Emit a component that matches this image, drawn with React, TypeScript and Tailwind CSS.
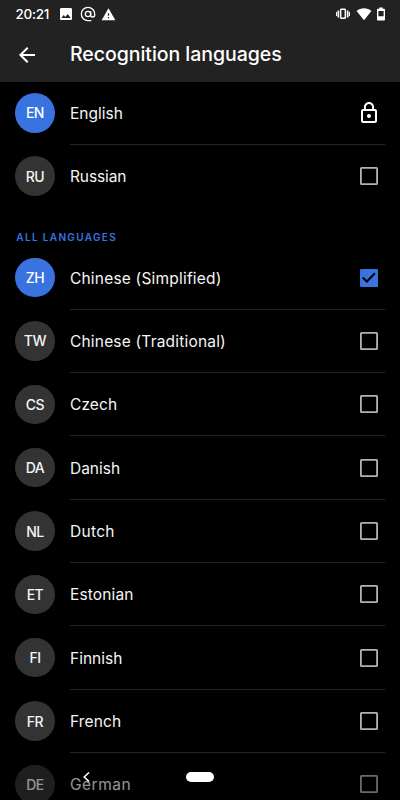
type Language = { code: string; name: string; state: 'locked' | 'on' | 'off'; spacing: string; last?: boolean };

const recent: Language[] = [
  { code: 'EN', name: 'English', state: 'locked', spacing: 'tracking-[0px]' },
  { code: 'RU', name: 'Russian', state: 'off', spacing: 'tracking-[-0.1px]', last: true },
];

const all: Language[] = [
  { code: 'ZH', name: 'Chinese (Simplified)', state: 'on', spacing: 'tracking-[0.2px]' },
  { code: 'TW', name: 'Chinese (Traditional)', state: 'off', spacing: 'tracking-[0.19px]' },
  { code: 'CS', name: 'Czech', state: 'off', spacing: 'tracking-[0.1px]' },
  { code: 'DA', name: 'Danish', state: 'off', spacing: 'tracking-[0px]' },
  { code: 'NL', name: 'Dutch', state: 'off', spacing: 'tracking-[0.3px]' },
  { code: 'ET', name: 'Estonian', state: 'off', spacing: 'tracking-[0.15px]' },
  { code: 'FI', name: 'Finnish', state: 'off', spacing: 'tracking-[0px]' },
  { code: 'FR', name: 'French', state: 'off', spacing: 'tracking-[0.15px]' },
  { code: 'DE', name: 'German', state: 'off', spacing: 'tracking-[0.5px]' },
];

function Control({ state }: { state: Language['state'] }) {
  if (state === 'locked') {
    return (
      <svg className="size-6" viewBox="0 0 24 24" fill="#fff">
        <path d="M12 17c1.1 0 2-.9 2-2s-.9-2-2-2-2 .9-2 2 .9 2 2 2zm6-9h-1V6c0-2.76-2.24-5-5-5S7 3.24 7 6v2H6c-1.1 0-2 .9-2 2v10c0 1.1.9 2 2 2h12c1.1 0 2-.9 2-2V10c0-1.1-.9-2-2-2zM8.9 6c0-1.71 1.39-3.1 3.1-3.1s3.1 1.39 3.1 3.1v2H8.9V6zM18 20H6V10h12v10z" />
      </svg>
    );
  }
  if (state === 'on') {
    return (
      <svg className="size-6" viewBox="0 0 24 24">
        <rect x="3" y="3" width="18" height="18" rx="1.2" fill="#3873e0" />
        <path d="M5.700 11.500l4.200 4 8-8.200" fill="none" stroke="#000" strokeWidth="2" />
      </svg>
    );
  }
  return (
    <svg className="size-6" viewBox="0 0 24 24">
      <rect x="3.9" y="3.9" width="16.2" height="16.2" rx="0.6" fill="none" stroke="#b3b3b3" strokeWidth="1.8" />
    </svg>
  );
}

function Row({ item }: { item: Language }) {
  return (
    <div className="flex h-[63.35px] shrink-0 pl-[15.2px]">
      <div
        className={`mt-[11.5px] flex size-[39.500px] shrink-0 items-center justify-center rounded-full text-[14px] font-medium tracking-[-0.5px] ${
          item.state === 'off' ? 'bg-[#333333] text-[#f5f5f5]' : 'bg-[#3873e0] text-white'
        }`}
      >
        {item.code}
      </div>
      <div
        className={`mr-[15px] ml-[15.3px] flex flex-1 items-center justify-between border-b pr-[4px] ${
          item.last ? 'border-transparent' : 'border-[#252525]'
        }`}
      >
        <span className={`pt-[1.2px] text-[15.5px] text-[#f5f5f5] ${item.spacing}`}>{item.name}</span>
        <Control state={item.state} />
      </div>
    </div>
  );
}

export default function App() {
  return (
    <div className="relative flex h-[800px] w-[400px] flex-col overflow-hidden bg-black font-['Inter',sans-serif]">
      <header className="h-[81.6px] shrink-0 bg-[#222222] text-white">
        <div className="flex h-[28px] items-center pl-[15.500px] pr-[15px]">
          <span className="w-[34px] text-[13.500px] font-medium tracking-[-0.300px]">20:21</span>
          <svg className="ml-[8.500px] size-4" viewBox="0 0 24 24" fill="#fff">
            <path d="M21 19V5c0-1.1-.9-2-2-2H5c-1.1 0-2 .9-2 2v14c0 1.1.9 2 2 2h14c1.1 0 2-.9 2-2zM8.5 13.5l2.5 3.01L14.5 12l4.5 6H5l3.500-4.500z" />
          </svg>
          <svg className="ml-[5.500px] size-4" viewBox="0 0 24 24" fill="none" stroke="#fff" strokeWidth="2">
            <circle cx="12" cy="12" r="4" />
            <path d="M17 22H12a10 10 0 1 1 10-10v1.500a2.900 2.900 0 0 1-6 0V8" />
          </svg>
          <svg className="ml-[5.500px] size-[15px]" viewBox="0 0 24 24" fill="#fff">
            <path d="M1 21h22L12 2 1 21zm12-3h-2v-2h2v2zm0-4h-2v-4h2v4z" />
          </svg>
          <div className="flex-1" />
          <svg className="h-[14px] w-[14px]" viewBox="0 0 14 14" fill="#fff">
            <rect x="4.700" y="2.200" width="4.600" height="9" rx="0.500" fill="none" stroke="#fff" strokeWidth="1.400" />
            <path d="M0 5h1v4H0zM1.500 3.500h1.700v7H1.500zM13 5h1v4h-1zM10.800 3.500h1.700v7h-1.700z" />
          </svg>
          <svg className="ml-[6.500px] h-[14px] w-[16px]" viewBox="0 0 16 14" fill="#fff">
            <path d="M8 13.300L.6 3.900C4.700.3 11.300.3 15.400 3.900z" />
          </svg>
          <svg className="ml-[5px] h-[14px] w-[8px]" viewBox="0 0 8 14">
            <path fill="#fff" fillRule="evenodd" d="M2.300.5h3.400v1.300h1.500q.8 0 .8.800v10.200q0 .7-.8.700H.8q-.8 0-.8-.7V2.600q0-.8.800-.8h1.500zM1.400 4v5.200h5.200V4z" />
          </svg>
        </div>
        <div className="flex h-[53px] items-center pl-[15px]">
          <svg className="size-6" viewBox="0 0 24 24" fill="#fff">
            <path d="M20 11H7.830l5.590-5.590L12 4l-8 8 8 8 1.410-1.410L7.830 13H20v-2z" />
          </svg>
          <h1 className="ml-[31px] pt-px text-[19.500px] font-medium tracking-[-0.04px]">Recognition languages</h1>
        </div>
      </header>
      <main className="flex flex-col">
        {recent.map((item) => (
          <Row key={item.code} item={item} />
        ))}
        <h2 className="flex h-[38.100px] shrink-0 items-center pt-[19.500px] pl-[16.300px] text-[10px] font-semibold tracking-[1.350px] text-[#3873e0]">
          ALL LANGUAGES
        </h2>
        {all.map((item) => (
          <Row key={item.code} item={item} />
        ))}
      </main>
      <nav className="absolute inset-x-0 bottom-0 h-[47px] bg-black/40">
        <svg className="absolute top-[18px] left-[82px] h-[12px] w-[8px]" viewBox="0 0 8 12" fill="none" stroke="#fff" strokeWidth="1.600">
          <path d="M7 1.500L2.200 6 7 10.500" />
        </svg>
        <div className="absolute top-[18.500px] left-[186px] h-[10.500px] w-[28px] rounded-full bg-white" />
      </nav>
    </div>
  );
}
